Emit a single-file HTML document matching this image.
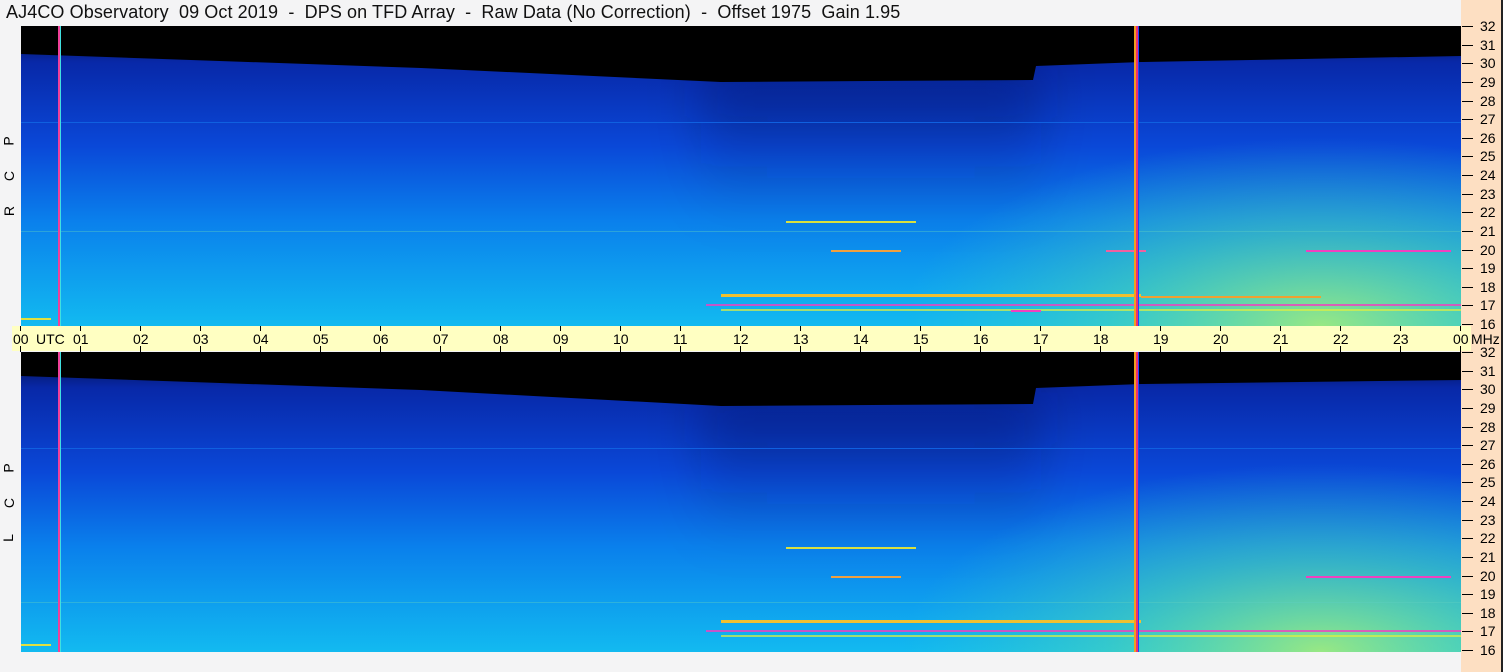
<!DOCTYPE html>
<html><head><meta charset="utf-8"><style>
body{margin:0;width:1503px;height:672px;background:#f4f4f5;position:relative;overflow:hidden;font-family:"Liberation Sans",sans-serif;}
.title{position:absolute;left:6px;top:2px;font-size:18px;color:#111;white-space:pre;letter-spacing:0.1px}
.right{position:absolute;left:1461px;top:0;width:40px;height:672px;background:#fddfc2;border-right:2px solid #222}
.yl{position:absolute;font-size:14px;color:#000;left:1480px}
.tk{position:absolute;left:1462px;width:11px;height:1px;background:#000}
.bar{position:absolute;left:12px;top:326px;width:1459px;height:25px;background:#ffffc2}
.hl{position:absolute;top:331px;font-size:14px;color:#000;white-space:pre}
.ht{position:absolute;width:1px;background:#000}
.side{position:absolute;left:4px;font-size:14px;transform:rotate(-90deg);color:#000}
svg{position:absolute;left:21px}
</style></head><body>
<div class="title">AJ4CO Observatory  09 Oct 2019  -  DPS on TFD Array  -  Raw Data (No Correction)  -  Offset 1975  Gain 1.95</div>
<div class="right"></div>
<div class="side" style="top:133px">P</div><div class="side" style="top:168px">C</div><div class="side" style="top:203px">R</div>
<div class="side" style="top:460px">P</div><div class="side" style="top:495px">C</div><div class="side" style="top:530px">L</div>

<svg width="1440" height="300" style="top:26px" viewBox="0 0 1440 300">
<defs>
<linearGradient id="v" x1="0" y1="0" x2="0" y2="1">
<stop offset="0" stop-color="#020a40"/><stop offset="0.12" stop-color="#0828a8"/><stop offset="0.4" stop-color="#0a48d8"/><stop offset="0.65" stop-color="#0a80ec"/><stop offset="1" stop-color="#12baf0"/></linearGradient>
<radialGradient id="g" cx="1300" cy="300" r="420" gradientUnits="userSpaceOnUse" gradientTransform="translate(1300 300) scale(1 0.45) translate(-1300 -300)">
<stop offset="0" stop-color="#b0f070" stop-opacity="0.85"/><stop offset="0.5" stop-color="#60e0a0" stop-opacity="0.45"/><stop offset="1" stop-color="#40d0c0" stop-opacity="0"/></radialGradient>
<linearGradient id="d" x1="0" y1="0" x2="0" y2="1"><stop offset="0" stop-color="#000030" stop-opacity="0.35"/><stop offset="0.6" stop-color="#000030" stop-opacity="0.08"/><stop offset="1" stop-color="#000030" stop-opacity="0"/></linearGradient>
<filter id="b" x="-20%" y="-20%" width="140%" height="140%"><feGaussianBlur stdDeviation="25"/></filter>
</defs>
<rect width="1440" height="300" fill="url(#v)"/>
<rect x="680" y="40" width="340" height="160" fill="url(#d)" filter="url(#b)"/>
<rect width="1440" height="300" fill="url(#g)"/>
<polygon points="0,0 1440,0 1440,30 1120,36 1015,40 1012,54 700,56 400,42 0,28" fill="#000"/>
<rect x="0" y="96" width="1440" height="1" fill="#1060e0"/>
<rect x="765" y="195" width="130" height="2" fill="#d8e040"/>
<rect x="810" y="224" width="70" height="2" fill="#f0a040"/>
<rect x="1085" y="224" width="40" height="2" fill="#f060a0"/>
<rect x="1285" y="224" width="145" height="2" fill="#f040c0"/>
<rect x="0" y="205" width="1440" height="1" fill="#60d0c0" opacity="0.4"/>
<rect x="700" y="268" width="420" height="3" fill="#f0c030"/>
<rect x="685" y="278" width="755" height="2" fill="#f040c0" opacity="0.8"/>
<rect x="700" y="283" width="740" height="2" fill="#e0f040" opacity="0.7"/>
<rect x="1120" y="270" width="180" height="2" fill="#f0a030"/>
<rect x="990" y="284" width="30" height="2" fill="#f040c0"/>
<rect x="0" y="292" width="30" height="2" fill="#e0e040"/>
<rect x="37" y="0" width="2" height="300" fill="#f0409a"/><rect x="39" y="0" width="1" height="300" fill="#40e0e0"/>
<rect x="1113" y="0" width="2" height="300" fill="#f0a020"/><rect x="1115" y="0" width="2" height="300" fill="#f03070"/><rect x="1117" y="0" width="1" height="300" fill="#2040ff"/>
</svg>

<svg width="1440" height="300" style="top:352px" viewBox="0 0 1440 300">
<rect width="1440" height="300" fill="url(#v)"/>
<rect x="680" y="40" width="340" height="160" fill="url(#d)" filter="url(#b)"/>
<rect width="1440" height="300" fill="url(#g)"/>
<polygon points="0,0 1440,0 1440,28 1120,32 1015,36 1012,52 700,54 400,38 0,24" fill="#000"/>
<rect x="0" y="96" width="1440" height="1" fill="#1060e0"/>
<rect x="765" y="195" width="130" height="2" fill="#d8e040"/>
<rect x="810" y="224" width="70" height="2" fill="#f0a040"/>
<rect x="1285" y="224" width="145" height="2" fill="#f040c0"/>
<rect x="0" y="250" width="1440" height="1" fill="#60d0c0" opacity="0.4"/>
<rect x="700" y="268" width="420" height="3" fill="#f0c030"/>
<rect x="685" y="278" width="755" height="2" fill="#f040c0" opacity="0.8"/>
<rect x="700" y="283" width="740" height="2" fill="#e0f040" opacity="0.7"/>
<rect x="0" y="292" width="30" height="2" fill="#e0e040"/>
<rect x="37" y="0" width="2" height="300" fill="#f0409a"/><rect x="39" y="0" width="1" height="300" fill="#40e0e0"/>
<rect x="1113" y="0" width="2" height="300" fill="#f0a020"/><rect x="1115" y="0" width="2" height="300" fill="#f03070"/><rect x="1117" y="0" width="1" height="300" fill="#2040ff"/>
</svg>

<div class="bar"></div>
<div id="hours"></div>
<div id="axis"></div>
<div class="hl" style="left:36px">UTC</div>
<div class="hl" style="left:1471px">MHz</div>
<script>
var h='';
for(var i=0;i<=24;i++){var x=21+60*i;var lab=(i==24?'00':(i<10?'0'+i:''+i));
h+='<div class="ht" style="left:'+(x-1)+'px;top:326px;height:5px"></div><div class="ht" style="left:'+(x-1)+'px;top:346px;height:6px"></div>';
h+='<div class="hl" style="left:'+(x-8)+'px">'+lab+'</div>';}
document.getElementById('hours').innerHTML=h;
var a='';
function col(top){for(var k=0;k<=16;k++){var y=top+k*18.63;var v=32-k;if(top>300&&v==16)continue;
a+='<div class="tk" style="top:'+Math.round(y)+'px"></div><div class="yl" style="top:'+Math.round(y-8)+'px">'+v+'</div>';}}
col(26);col(352);
document.getElementById('axis').innerHTML=a;
</script>
<div class="tk" style="top:650px"></div><div class="yl" style="top:642px">16</div>
</body></html>
